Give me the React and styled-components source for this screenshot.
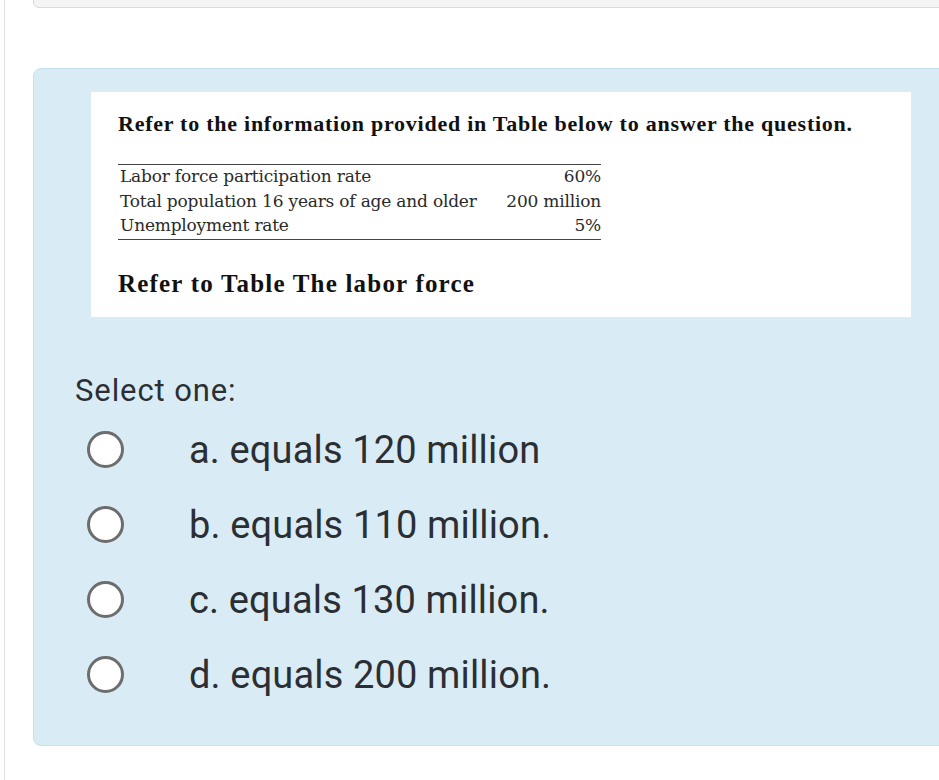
import React from 'react'
import styled, { createGlobalStyle } from 'styled-components'

const GlobalStyle = createGlobalStyle`
  body {
    margin: 0;
    background: #ffffff;
    overflow: hidden;
    font-family: Roboto, "Liberation Sans", sans-serif;
  }
`

const Page = styled.div`
  margin-left: 4px;
  min-height: 780px;
  border-left: 1px solid #e2e2e2;
  padding-left: 28px;
  display: flex;
  flex-direction: column;
`

const TopCard = styled.div`
  margin-top: -20px;
  height: 26px;
  margin-right: -12px;
  background: #f4f4f4;
  border: 1px solid #dadada;
  border-radius: 6px;
`

const QuestionBox = styled.div`
  margin-top: 60px;
  margin-right: -12px;
  height: 678px;
  box-sizing: border-box;
  background: #d9ecf6;
  border: 1px solid #c4e2ec;
  border-radius: 8px;
  padding: 23px 0 0 57px;
  display: flex;
  flex-direction: column;
`

const ImageBlock = styled.div`
  width: 820px;
  height: 225px;
  box-sizing: border-box;
  background: #ffffff;
  padding: 19px 0 0 27px;
  display: flex;
  flex-direction: column;
  color: #111;
`

const Heading = styled.div`
  font-family: "Liberation Serif", "Times New Roman", serif;
  font-weight: bold;
  font-size: ${p => p.size}px;
  letter-spacing: ${p => p.spacing}px;
  line-height: 1.2;
  margin-top: ${p => p.top || 0}px;
`

const DataTable = styled.div`
  margin-top: 27px;
  width: 483px;
  border-top: 1.5px solid #444;
  border-bottom: 1.5px solid #444;
  font-family: "DejaVu Serif", "Liberation Serif", serif;
  font-size: 17px;
  letter-spacing: -0.2px;
  color: #2a2a2a;
`

const DataRow = styled.div`
  display: flex;
  justify-content: space-between;
  height: 24.5px;
  line-height: 22px;
  padding-left: 2px;
`

const SelectLabel = styled.div`
  margin-top: 55px;
  margin-left: -16px;
  font-size: 31px;
  color: #2b2f33;
  letter-spacing: 0.9px;
`

const Options = styled.div`
  margin-top: 3px;
  display: flex;
  flex-direction: column;
`

const Option = styled.label`
  display: flex;
  align-items: center;
  height: 75px;
  margin-left: -4px;
`

const Radio = styled.span`
  width: 31px;
  height: 31px;
  border-radius: 50%;
  border: 3px solid #6d6d6d;
  background: #ffffff;
  flex-shrink: 0;
`

const OptionText = styled.span`
  margin-left: 65px;
  font-size: 38px;
  color: #2b2f33;
  letter-spacing: 0.15px;
`

const rows = [
  ['Labor force participation rate', '60%'],
  ['Total population 16 years of age and older', '200 million'],
  ['Unemployment rate', '5%']
]

const answers = [
  'a. equals 120 million',
  'b. equals 110 million.',
  'c. equals 130 million.',
  'd. equals 200 million.'
]

export default function App() {
  return (
    <>
      <GlobalStyle />
      <Page>
        <TopCard />
        <QuestionBox>
          <ImageBlock>
            <Heading size={22} spacing={0.75}>
              Refer to the information provided in Table below to answer the question.
            </Heading>
            <DataTable>
              {rows.map(([label, value]) => (
                <DataRow key={label}>
                  <span>{label}</span>
                  <span>{value}</span>
                </DataRow>
              ))}
            </DataTable>
            <Heading size={25} spacing={1.2} top={29}>Refer to Table The labor force</Heading>
          </ImageBlock>
          <SelectLabel>Select one:</SelectLabel>
          <Options>
            {answers.map(text => (
              <Option key={text}>
                <Radio />
                <OptionText>{text}</OptionText>
              </Option>
            ))}
          </Options>
        </QuestionBox>
      </Page>
    </>
  )
}
